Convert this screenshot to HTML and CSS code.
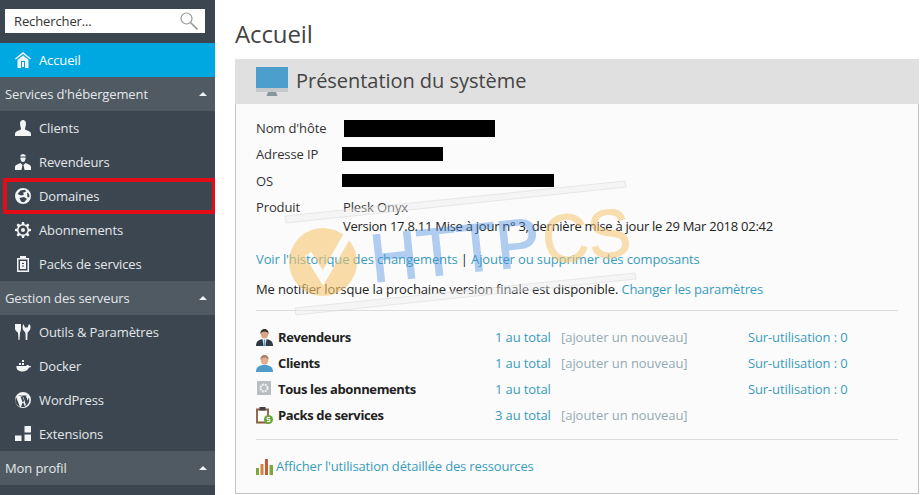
FILE: index.html
```html
<!DOCTYPE html>
<html lang="fr">
<head>
  <meta charset="UTF-8">
  <title>Accueil</title>
  <link rel="stylesheet" href="styles.css">
</head>
<body>
  <aside class="sidebar">
    <div class="search">
      <span>Rechercher...</span>
      <svg class="search-icon" viewBox="0 0 18 18" width="18" height="18"><circle cx="6.500" cy="6.500" r="5.500" fill="none" stroke="#999" stroke-width="1.200"/><path d="M10.500 10.500l7 7" stroke="#999" stroke-width="1.600"/></svg>
    </div>
    <nav>
      <a class="nav-item active">
        <svg class="nav-icon" viewBox="0 0 16 16"><path fill-rule="evenodd" d="M8 0l8 6.500-.8 1L8 2 .8 7.500 0 6.500zM8 3.500l5.500 4.300V16h-11V7.800zM6 9v7h4V9zM7 10h2v5H7z"/></svg>
        Accueil
      </a>
      <div class="nav-section">Services d'hébergement<i class="caret"></i></div>
      <a class="nav-item">
        <svg class="nav-icon" viewBox="0 0 16 16"><path d="M5 3.500C5 1.500 6.300 0 8 0s3 1.500 3 3.500S10 8 10 9c0 1.500 6 1.500 6 5v2H0v-2c0-3.500 6-3.500 6-5 0-1-1-3.500-1-5.500z"/></svg>
        Clients
      </a>
      <a class="nav-item">
        <svg class="nav-icon" viewBox="0 0 16 16"><path d="M5.500 1L8 0l2.500 1v1.500h-5zM5.300 3.500h5.400C10.700 6 9.500 8 8 8S5.300 6 5.300 3.500zM5.500 9l2 2-1 5H0v-3c0-2 3-3 5.500-4zM10.500 9C13 10 16 11 16 13v3H9.500l-1-5z"/></svg>
        Revendeurs
      </a>
      <a class="nav-item outlined">
        <svg class="nav-icon" viewBox="0 0 16 16"><path fill-rule="evenodd" d="M8 0a8 8 0 100 16A8 8 0 008 0zM2.500 6l3-3.500L10 1.800l1 2-3 1 1 2-3 .7zM4.500 10l4.500-1 3 2-3 3.300-3-.8zM12 4.500l2 1.500.5 3-2 .5z"/></svg>
        Domaines
      </a>
      <a class="nav-item">
        <svg class="nav-icon" viewBox="0 0 16 16"><path fill-rule="evenodd" d="M7 0h2l.5 2.200 1.500.6L13 1.600 14.400 3l-1.200 2 .6 1.500L16 7v2l-2.200.5-.6 1.500 1.200 2L13 14.400l-2-1.200-1.500.6L9 16H7l-.5-2.200-1.500-.6-2 1.200L1.600 13l1.200-2-.6-1.500L0 9V7l2.200-.5.6-1.500-1.200-2L3 1.600l2 1.200 1.500-.6zM8 3.500a4.500 4.500 0 100 9 4.500 4.500 0 000-9zM8 6a2 2 0 110 4 2 2 0 010-4z"/></svg>
        Abonnements
      </a>
      <a class="nav-item">
        <svg class="nav-icon" viewBox="0 0 16 16"><path fill-rule="evenodd" d="M5 0h6v2h3v14H2V2h3zM3.500 3.500v11h9v-11zM5 5h6v8H5zM7 7v1h2V7zM7 9.500v1h2v-1z"/></svg>
        Packs de services
      </a>
      <div class="nav-section">Gestion des serveurs<i class="caret"></i></div>
      <a class="nav-item">
        <svg class="nav-icon" viewBox="0 0 16 16"><path d="M0 0h6v5c0 2-1 3-1 4l-.5 7h-1L3 9C3 8 0 7 0 5zM8.500 0L10 3.500h2.500L14 0c2 1 2 5 0 7-1 1-1.500 1.500-1.500 3l-.2 6h-1.600l-.2-6c0-1.500-.5-2-1.500-3-2-2-2-6 0-7z"/></svg>
        Outils &amp; Paramètres
      </a>
      <a class="nav-item">
        <svg class="nav-icon" viewBox="0 0 16 16"><path d="M7 2h2v2H7zM4 5h2v2H4zM7 5h2v2H7zM1.500 8H11c.5-1 1-1 2-1 .5 0 1 .5 1 1h2c0 1-1 1.500-2 1.500-1 2.500-3.500 4-6.500 4C3 13.500 1 11 1.500 8z"/></svg>
        Docker
      </a>
      <a class="nav-item">
        <svg class="nav-icon" viewBox="0 0 16 16"><path fill-rule="evenodd" d="M8 0a8 8 0 100 16A8 8 0 008 0zM1.200 5.200L5 15A7 7 0 011.200 5.200zM3 3.500h3.500V4l-1 .2L8 11.500l1-3-1-3.300-1-.9V3.500h5c-1 .2-1 1-.5 2 .5 1.200 1 2 .8 3.200L10.800 13 8.500 5 8 5zM13.800 5.500A7 7 0 0110 14.500l2.500-6c.8-1.200 1-2 1.300-3zM8 9.500l2 5.300a7 7 0 01-4 0z"/></svg>
        WordPress
      </a>
      <a class="nav-item">
        <svg class="nav-icon" viewBox="0 0 16 16"><path d="M9.500 0H16v6.500H9.500zM9.500 8.500H16V15H9.500zM0 9.500h6.500V15H0z"/></svg>
        Extensions
      </a>
      <div class="nav-section">Mon profil<i class="caret"></i></div>
    </nav>
  </aside>

  <main class="content">
    <h1>Accueil</h1>
    <section class="panel">
      <header class="panel-head">
        <svg class="monitor" viewBox="0 0 32 30" width="32" height="30"><path d="M0 0h32v21H0z" fill="#4c9fcd"/><path d="M0 21h32v3a1 1 0 01-1 1H1a1 1 0 01-1-1z" fill="#c4c9cc"/><path d="M12 25h8l1.500 4h-11z" fill="#87979b"/></svg>
        <h2>Présentation du système</h2>
      </header>
      <div class="panel-body">
        <dl class="info">
          <dt>Nom d'hôte</dt><dd class="tall"><span class="redact host"></span></dd>
          <dt>Adresse IP</dt><dd><span class="redact ip"></span></dd>
          <dt>OS</dt><dd><span class="redact os"></span></dd>
          <dt>Produit</dt>
          <dd class="product">Plesk Onyx<br><span class="version">Version 17.8.11 Mise à jour n° 3, dernière mise à jour le 29 Mar 2018 02:42</span></dd>
        </dl>
        <p class="links"><a>Voir l'historique des changements</a> | <a>Ajouter ou supprimer des composants</a></p>
        <p class="notify">Me notifier lorsque la prochaine version finale est disponible. <a>Changer les paramètres</a></p>
        <div class="stats">
          <div class="stat-name">
            <svg viewBox="0 0 17 17" width="17" height="17"><path d="M0 17c0-5 3-7 8.500-7S17 12 17 17z" fill="#2f3a44"/><path d="M6.500 10h4L9.500 17h-2z" fill="#fff"/><path d="M7.800 10.500h1.400l.3 6.500H7.500z" fill="#4d9cc9"/><ellipse cx="8.500" cy="5" rx="3.800" ry="4.500" fill="#d9a582"/><path d="M4.500 5C4 1.500 6.500 0 8.500 0s4.500 1.500 4 5c-.5-1.500-1.500-2.500-4-2.500S5 3.500 4.500 5z" fill="#35302c"/></svg>
            <b>Revendeurs</b>
          </div>
          <a>1 au total</a><a class="add">[ajouter un nouveau]</a><a>Sur-utilisation : 0</a>
          <div class="stat-name">
            <svg viewBox="0 0 17 17" width="17" height="17"><path d="M0 17c0-5 3-7 8.500-7S17 12 17 17z" fill="#4d9cc9"/><ellipse cx="8.500" cy="5" rx="3.800" ry="4.800" fill="#e0ae8c"/><path d="M4.500 5C4 1.500 6.500 0 8.500 0s4.500 1.500 4 5c-.5-1.500-1.500-2.500-4-2.500S5 3.500 4.500 5z" fill="#a7805f"/></svg>
            <b>Clients</b>
          </div>
          <a>1 au total</a><a class="add">[ajouter un nouveau]</a><a>Sur-utilisation : 0</a>
          <div class="stat-name">
            <svg viewBox="0 0 17 17" width="17" height="17"><rect x="1" y="0" width="14" height="14" fill="#b9bdc0"/><circle cx="8" cy="7" r="3.500" fill="none" stroke="#eceeef" stroke-width="2.200" stroke-dasharray="2 .8"/></svg>
            <b>Tous les abonnements</b>
          </div>
          <a>1 au total</a><span></span><a>Sur-utilisation : 0</a>
          <div class="stat-name">
            <svg viewBox="0 0 17 17" width="17" height="17"><path d="M1 2.500h11v13H1z" fill="#fff" stroke="#8a5a3c" stroke-width="1.800"/><path d="M3.500 0h6v3.500h-6z" fill="#3f4347"/><circle cx="12.500" cy="12.500" r="4.500" fill="#6aa53a"/><path d="M14 10.500h-2.800l-.2 2h2.800v2H11" fill="none" stroke="#fff"/></svg>
            <b>Packs de services</b>
          </div>
          <a>3 au total</a><a class="add">[ajouter un nouveau]</a><span></span>
        </div>
        <p class="usage">
          <svg viewBox="0 0 17 17" width="17" height="17"><path d="M0 10h3v7H0z" fill="#7aa83a"/><path d="M4.500 6h3v11h-3z" fill="#d9823b"/><path d="M9 1h3v16H9z" fill="#c9573a"/><path d="M13.500 7H17v10h-3.500z" fill="#7aa83a"/></svg>
          <a>Afficher l'utilisation détaillée des ressources</a>
        </p>
      </div>
    </section>
  </main>

  <svg class="watermark" viewBox="0 0 920 495" width="920" height="495">
    <defs>
      <mask id="tick">
        <rect width="920" height="495" fill="#fff"/>
        <path d="M308 254l15 24 24-42" fill="none" stroke="#000" stroke-width="8"/>
      </mask>
    </defs>
    <g fill="#eee" fill-opacity=".4" stroke="#d9d9d9" stroke-opacity=".55">
      <path d="M285 216L625 181l1 6-340 36z"/>
      <path d="M295 308L635 273l1 6-340 36z"/>
    </g>
    <circle cx="323" cy="262" r="34" fill="#f6c770" fill-opacity=".6" mask="url(#tick)"/>
    <g transform="rotate(-6 450 260)" font-family="'Liberation Sans', sans-serif" font-size="68">
      <g class="wm-blue">
        <text x="371" y="274" textLength="170" lengthAdjust="spacingAndGlyphs">HTTP</text>
      </g>
      <g class="wm-yellow">
        <text x="544" y="274" textLength="88" lengthAdjust="spacingAndGlyphs">CS</text>
      </g>
    </g>
  </svg>
</body>
</html>
```

FILE: styles.css
```css
* {
  margin: 0;
  padding: 0;
  box-sizing: border-box;
}

body {
  width: 920px;
  height: 495px;
  overflow: hidden;
  display: flex;
  position: relative;
  background-color: #fff;
  font-family: 'Open Sans', sans-serif;
  font-size: 13px;
  letter-spacing: -0.12px;
  color: #222;
}

a {
  color: #3a9bbc;
}

.sidebar {
  width: 215px;
  height: 495px;
  flex-shrink: 0;
  padding-top: 9px;
  background-color: #3b4651;
  color: #e4e7e9;
  overflow: hidden;
}

.search {
  height: 24px;
  margin: 0 10px 10px 5px;
  padding: 0 7px 0 9px;
  display: flex;
  justify-content: space-between;
  align-items: center;
  background-color: #fff;
  color: #333;
}

.nav-item {
  height: 34px;
  padding-left: 15px;
  display: flex;
  align-items: center;
  gap: 8px;
  color: #e4e7e9;
}

.nav-icon {
  width: 16px;
  height: 16px;
  fill: #f2f4f5;
}

.nav-item.active {
  background-color: #00a8e1;
  color: #fff;
}

.nav-item.outlined {
  outline: 4px solid #e30d17;
  outline-offset: -3px;
  margin-left: 4px;
  padding-left: 11px;
}

.nav-section {
  height: 34px;
  padding: 0 5px;
  display: flex;
  align-items: center;
  justify-content: space-between;
  background-color: #4f5a63;
  color: #e4e7e9;
}

.caret {
  margin-right: 3px;
  border-left: 4px solid transparent;
  border-right: 4px solid transparent;
  border-bottom: 4px solid #f2f4f5;
}

.content {
  flex: 1;
  padding: 19px 1px 0 20px;
}

h1 {
  font-size: 24px;
  font-weight: 400;
  line-height: 30px;
  margin-bottom: 10px;
  color: #444;
}

.panel {
  height: 435px;
  border: 1px solid #c4c4c4;
  border-top: none;
  background-color: #fbfbfb;
}

.panel-head {
  height: 45px;
  padding-left: 21px;
  display: flex;
  align-items: center;
  gap: 8px;
  margin-left: -1px;
  margin-right: -1px;
  background-color: #e0e0e0;
}

.panel-head h2 {
  font-size: 20px;
  font-weight: 400;
  letter-spacing: -0.04px;
  padding-bottom: 2px;
  color: #444;
}

.panel-body {
  padding: 11px 20px 0 20px;
}

.info {
  display: grid;
  grid-template-columns: 87px 1fr;
  grid-auto-rows: 26.300px;
  align-items: center;
  color: #333;
}

.redact {
  display: block;
  background-color: #000;
}

.host {
  width: 151px;
  height: 17px;
  margin-left: 1px;
}

.ip {
  width: 101px;
  height: 14px;
  margin-left: -1px;
}

.os {
  width: 212px;
  height: 13px;
  margin-left: -1px;
}

.product {
  grid-row: span 2;
  line-height: 19px;
  align-self: start;
  padding-top: 4px;
}

.version {
  letter-spacing: -0.26px;
  color: #222;
}

.links {
  margin-top: 3px;
  line-height: 20px;
}

.notify {
  margin-top: 10px;
  padding-bottom: 11px;
  line-height: 20px;
  border-bottom: 1px solid #ddd;
}

.notify a,
.usage a {
  letter-spacing: -0.16px;
}

.stats {
  display: grid;
  grid-template-columns: 239px 66px 187px 1fr;
  grid-auto-rows: 26px;
  align-items: center;
  padding: 13px 0 11px;
  border-bottom: 1px solid #ddd;
}

.stat-name {
  display: flex;
  align-items: center;
  gap: 5px;
  color: #222;
}

.stat-name b {
  letter-spacing: -0.38px;
}

.add {
  letter-spacing: -0.05px;
  color: #93aab5;
}

.usage {
  margin-top: 17px;
  display: flex;
  align-items: center;
  gap: 3px;
}

.watermark {
  position: absolute;
  left: 0;
  top: 0;
  pointer-events: none;
}

.wm-blue {
  fill: #4a90e2;
  stroke: #4a90e2;
  stroke-width: 1.500px;
  opacity: 0.42;
}

.wm-yellow {
  fill: #f6c770;
  stroke: #f6c770;
  stroke-width: 1px;
  opacity: 0.55;
}
```
